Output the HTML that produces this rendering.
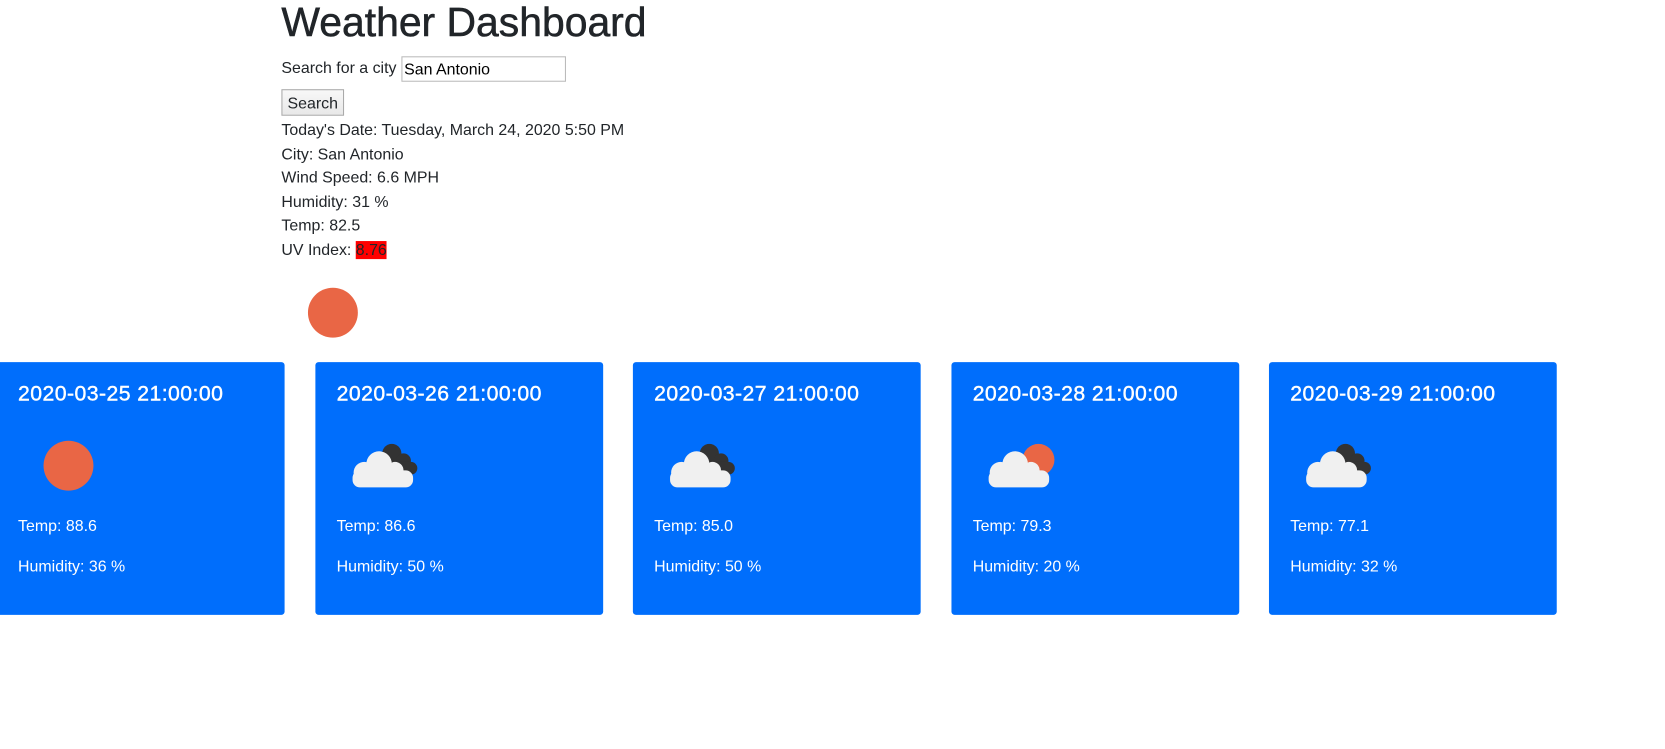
<!DOCTYPE html>
<html><head><style>
body{margin:0;background:#fff;width:1665px;height:748px;overflow:hidden;position:relative}
#w{position:absolute;left:0;top:0;width:1568px;height:705px;transform:scale(1.0619);transform-origin:0 0;font-family:"Liberation Sans",sans-serif;color:#212529;font-size:15px}
h1{position:absolute;left:265px;top:0;margin:0;font-size:38.5px;font-weight:normal;-webkit-text-stroke:.5px #212529;line-height:44px}
.s{position:absolute;left:265px;top:53px}
.s input{font:15px "Liberation Sans",sans-serif;width:155px;height:24px;border:1px solid #bbb;padding:0 2px;margin:0;vertical-align:middle;box-sizing:border-box}
.btn{position:absolute;left:265px;top:84px;width:59px;height:25px;border:1px solid #aaa;background:linear-gradient(#f8f8f8,#e8e8e8);font-size:15px;text-align:center;line-height:25px;box-sizing:border-box}
.info{position:absolute;left:265px;top:112px;line-height:22.6px}
.uv{background:#f00}
.sun{position:absolute;border-radius:50%;background:#e96645}
.card{position:absolute;top:341px;width:271px;height:238px;background:#006efc;border-radius:3px;color:#fff}
.ti{position:absolute;left:20px;top:19px;font-size:20px;letter-spacing:.4px;font-weight:normal;-webkit-text-stroke:.4px #fff}
.t{position:absolute;left:20px;top:146px}
.h{position:absolute;left:20px;top:184px}
.card svg{position:absolute;left:32px;top:72px}
</style></head><body><div id="w">
<h1>Weather Dashboard</h1>
<div class="s">Search for a city <input value="San Antonio"></div>
<div class="btn">Search</div>
<div class="info">Today's Date: Tuesday, March 24, 2020 5:50 PM<br>City: San Antonio<br>Wind Speed: 6.6 MPH<br>Humidity: 31 %<br>Temp: 82.5<br>UV Index: <span class="uv">8.76</span></div>
<div class="sun" style="left:290px;top:271px;width:47px;height:47px"></div>

<div class="card" style="left:-3px"><div class="ti">2020-03-25 21:00:00</div><div class="sun" style="left:44px;top:74px;width:47px;height:47px"></div><div class="t">Temp: 88.6</div><div class="h">Humidity: 36 %</div></div>

<div class="card" style="left:297px"><div class="ti">2020-03-26 21:00:00</div>
<svg width="70" height="50"><circle cx="40" cy="14" r="9" fill="#333"/><circle cx="51" cy="21" r="7" fill="#333"/><circle cx="58" cy="28" r="6" fill="#333"/><rect x="36" y="22" width="26" height="12" rx="6" fill="#333"/><circle cx="14" cy="32" r="10" fill="#f0f0f0"/><circle cx="28" cy="24" r="12" fill="#f0f0f0"/><circle cx="43" cy="30" r="8" fill="#f0f0f0"/><rect x="3" y="30" width="57" height="16" rx="7" fill="#f0f0f0"/></svg>
<div class="t">Temp: 86.6</div><div class="h">Humidity: 50 %</div></div>

<div class="card" style="left:596px"><div class="ti">2020-03-27 21:00:00</div>
<svg width="70" height="50"><circle cx="40" cy="14" r="9" fill="#333"/><circle cx="51" cy="21" r="7" fill="#333"/><circle cx="58" cy="28" r="6" fill="#333"/><rect x="36" y="22" width="26" height="12" rx="6" fill="#333"/><circle cx="14" cy="32" r="10" fill="#f0f0f0"/><circle cx="28" cy="24" r="12" fill="#f0f0f0"/><circle cx="43" cy="30" r="8" fill="#f0f0f0"/><rect x="3" y="30" width="57" height="16" rx="7" fill="#f0f0f0"/></svg>
<div class="t">Temp: 85.0</div><div class="h">Humidity: 50 %</div></div>

<div class="card" style="left:896px"><div class="ti">2020-03-28 21:00:00</div>
<svg width="70" height="50"><circle cx="50" cy="20" r="15" fill="#e96645"/><circle cx="14" cy="32" r="10" fill="#f0f0f0"/><circle cx="28" cy="24" r="12" fill="#f0f0f0"/><circle cx="43" cy="30" r="8" fill="#f0f0f0"/><rect x="3" y="30" width="57" height="16" rx="7" fill="#f0f0f0"/></svg>
<div class="t">Temp: 79.3</div><div class="h">Humidity: 20 %</div></div>

<div class="card" style="left:1195px"><div class="ti">2020-03-29 21:00:00</div>
<svg width="70" height="50"><circle cx="40" cy="14" r="9" fill="#333"/><circle cx="51" cy="21" r="7" fill="#333"/><circle cx="58" cy="28" r="6" fill="#333"/><rect x="36" y="22" width="26" height="12" rx="6" fill="#333"/><circle cx="14" cy="32" r="10" fill="#f0f0f0"/><circle cx="28" cy="24" r="12" fill="#f0f0f0"/><circle cx="43" cy="30" r="8" fill="#f0f0f0"/><rect x="3" y="30" width="57" height="16" rx="7" fill="#f0f0f0"/></svg>
<div class="t">Temp: 77.1</div><div class="h">Humidity: 32 %</div></div>
</div></body></html>
